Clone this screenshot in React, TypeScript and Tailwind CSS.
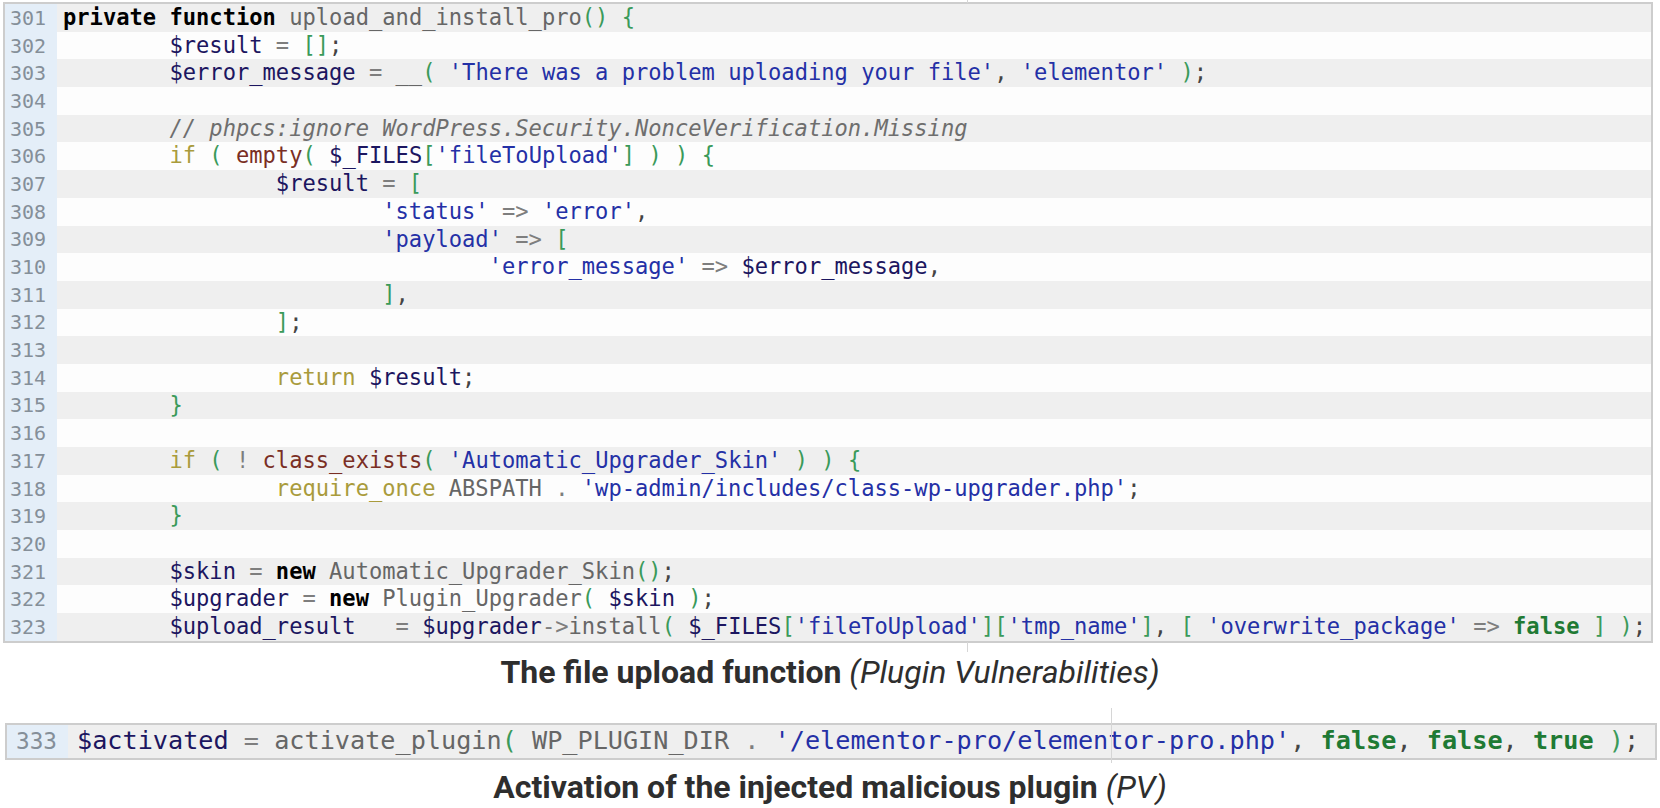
import clsx from "clsx";

type Tok = [string, string];

const tone: Record<string, string> = {
  k: "font-bold text-black",
  f: "text-[#666666]",
  v: "text-[#1c1660]",
  s: "text-[#2430a6]",
  p: "text-[#3a9a5a]",
  o: "text-[#7e7e7e]",
  c: "text-[#a99b3c]",
  b: "text-[#7a2e24]",
  x: "font-bold text-[#1f7a34]",
  m: "italic text-[#6e6e6e]",
  d: "text-[#444444]",
  t: "",
};

const lines: { n: number; indent: number; toks: Tok[] }[] = [
  { n: 301, indent: 0, toks: [["k", "private"], ["t", " "], ["k", "function"], ["t", " "], ["f", "upload_and_install_pro"], ["p", "()"], ["t", " "], ["p", "{"]] },
  { n: 302, indent: 1, toks: [["v", "$result"], ["o", " = "], ["p", "[]"], ["d", ";"]] },
  { n: 303, indent: 1, toks: [["v", "$error_message"], ["o", " = "], ["f", "__"], ["p", "("], ["t", " "], ["s", "'There was a problem uploading your file'"], ["d", ", "], ["s", "'elementor'"], ["t", " "], ["p", ")"], ["d", ";"]] },
  { n: 304, indent: 0, toks: [] },
  { n: 305, indent: 1, toks: [["m", "// phpcs:ignore WordPress.Security.NonceVerification.Missing"]] },
  { n: 306, indent: 1, toks: [["c", "if"], ["t", " "], ["p", "("], ["t", " "], ["b", "empty"], ["p", "("], ["t", " "], ["v", "$_FILES"], ["p", "["], ["s", "'fileToUpload'"], ["p", "]"], ["t", " "], ["p", ")"], ["t", " "], ["p", ")"], ["t", " "], ["p", "{"]] },
  { n: 307, indent: 2, toks: [["v", "$result"], ["o", " = "], ["p", "["]] },
  { n: 308, indent: 3, toks: [["s", "'status'"], ["o", " => "], ["s", "'error'"], ["d", ","]] },
  { n: 309, indent: 3, toks: [["s", "'payload'"], ["o", " => "], ["p", "["]] },
  { n: 310, indent: 4, toks: [["s", "'error_message'"], ["o", " => "], ["v", "$error_message"], ["d", ","]] },
  { n: 311, indent: 3, toks: [["p", "]"], ["d", ","]] },
  { n: 312, indent: 2, toks: [["p", "]"], ["d", ";"]] },
  { n: 313, indent: 0, toks: [] },
  { n: 314, indent: 2, toks: [["c", "return"], ["t", " "], ["v", "$result"], ["d", ";"]] },
  { n: 315, indent: 1, toks: [["p", "}"]] },
  { n: 316, indent: 0, toks: [] },
  { n: 317, indent: 1, toks: [["c", "if"], ["t", " "], ["p", "("], ["o", " ! "], ["b", "class_exists"], ["p", "("], ["t", " "], ["s", "'Automatic_Upgrader_Skin'"], ["t", " "], ["p", ")"], ["t", " "], ["p", ")"], ["t", " "], ["p", "{"]] },
  { n: 318, indent: 2, toks: [["c", "require_once"], ["t", " "], ["f", "ABSPATH"], ["o", " . "], ["s", "'wp-admin/includes/class-wp-upgrader.php'"], ["d", ";"]] },
  { n: 319, indent: 1, toks: [["p", "}"]] },
  { n: 320, indent: 0, toks: [] },
  { n: 321, indent: 1, toks: [["v", "$skin"], ["o", " = "], ["k", "new"], ["t", " "], ["f", "Automatic_Upgrader_Skin"], ["p", "()"], ["d", ";"]] },
  { n: 322, indent: 1, toks: [["v", "$upgrader"], ["o", " = "], ["k", "new"], ["t", " "], ["f", "Plugin_Upgrader"], ["p", "("], ["t", " "], ["v", "$skin"], ["t", " "], ["p", ")"], ["d", ";"]] },
  { n: 323, indent: 1, toks: [["v", "$upload_result"], ["o", "   = "], ["v", "$upgrader"], ["o", "->"], ["f", "install"], ["p", "("], ["t", " "], ["v", "$_FILES"], ["p", "["], ["s", "'fileToUpload'"], ["p", "]["], ["s", "'tmp_name'"], ["p", "]"], ["d", ", "], ["p", "["], ["t", " "], ["s", "'overwrite_package'"], ["o", " => "], ["x", "false"], ["t", " "], ["p", "]"], ["t", " "], ["p", ")"], ["d", ";"]] },
];

const activation: Tok[] = [["v", "$activated"], ["o", " = "], ["f", "activate_plugin"], ["p", "("], ["t", " "], ["f", "WP_PLUGIN_DIR"], ["o", " . "], ["s", "'/elementor-pro/elementor-pro.php'"], ["d", ", "], ["x", "false"], ["d", ", "], ["x", "false"], ["d", ", "], ["x", "true"], ["t", " "], ["p", ")"], ["d", ";"]];

function Code({ toks }: { toks: Tok[] }) {
  return (
    <>
      {toks.map(([k, text], i) => (
        <span key={i} className={tone[k]}>
          {text}
        </span>
      ))}
    </>
  );
}

export default function App() {
  return (
    <div className="relative h-[808px] w-[1660px] overflow-hidden bg-white pt-[2px] [font-family:'DejaVu_Sans_Mono',monospace]">
      {/* File upload listing */}
      <div className="ml-[3px] w-[1650px] border-2 border-[#cdcdcd]">
        {lines.map((l) => (
          <div key={l.n} className={clsx("flex h-[27.7px]", l.n % 2 ? "bg-[#efefef]" : "bg-[#fdfdfd]")}>
            <div className="flex w-[52px] shrink-0 items-center justify-end bg-[#e4eef8] pr-[11px] text-[20px] text-[#858f99]">
              {l.n}
            </div>
            <div className="whitespace-pre pl-[6px] text-[22.1px] leading-[27.7px] text-[#333]">
              {" ".repeat(l.indent * 8)}
              <Code toks={l.toks} />
            </div>
          </div>
        ))}
      </div>

      <p className="mt-[10px] text-center text-[32px] leading-[38px] text-[#2e2e2e] [font-family:Roboto,sans-serif]">
        <span className="font-bold">The file upload function</span> <span className="italic">(Plugin Vulnerabilities)</span>
      </p>

      {/* Activation line */}
      <div className="ml-[5px] mt-[32px] flex h-[37px] w-[1652px] border-2 border-[#cdcdcd] bg-[#efefef]">
        <div className="flex w-[61px] shrink-0 items-center justify-end bg-[#e4eef8] pr-[11px] text-[22.7px] text-[#858f99]">
          333
        </div>
        <div className="flex items-center whitespace-pre pl-[9px] text-[25.2px]">
          <Code toks={activation} />
        </div>
      </div>

      <p className="mt-[8px] text-center text-[32px] leading-[38px] text-[#2e2e2e] [font-family:Roboto,sans-serif]">
        <span className="font-bold">Activation of the injected malicious plugin</span> <span className="italic">(PV)</span>
      </p>

      {/* faint seams from the source page */}
      <div className="absolute left-[967px] top-0 h-[3px] w-px bg-[#d6d6d6]" />
      <div className="absolute left-[967px] top-[642px] h-[10px] w-px bg-[#d6d6d6]" />
      <div className="absolute left-[1111px] top-[708px] h-[55px] w-px bg-[#d6d6d6]" />
    </div>
  );
}
